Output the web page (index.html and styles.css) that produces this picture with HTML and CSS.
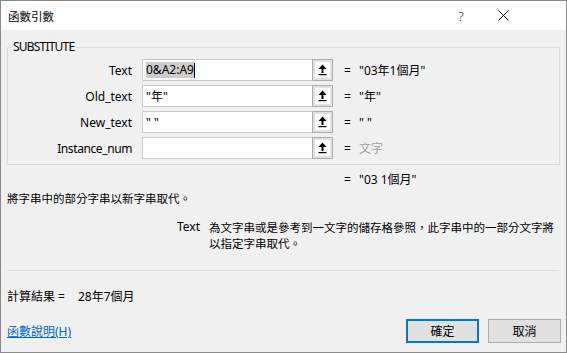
FILE: index.html
```html
<!DOCTYPE html>
<html lang="zh-Hant">
<head>
<meta charset="utf-8">
<title>函數引數</title>
<link rel="stylesheet" href="styles.css">
</head>
<body>
<div class="window">
  <div class="titlebar">
    <span class="title">函數引數</span>
    <span class="help">?</span>
    <span class="close"><svg width="11" height="11" viewBox="0 0 11 11"><path d="M0.5 0.5 L10.5 10.5 M10.5 0.5 L0.5 10.5" stroke="#000" stroke-width="1" fill="none"/></svg></span>
  </div>
  <div class="content">
    <fieldset class="group">
      <legend>SUBSTITUTE</legend>
      <div class="row">
        <span class="label">Text</span>
        <span class="field"><span class="input"><span class="sel">0&amp;A2:A9</span><span class="caret"></span></span><span class="refbtn"><svg width="9" height="12" viewBox="0 0 9 12"><path d="M4.5 0.5 L8.5 5 L5.5 5 L5.5 9 L3.5 9 L3.5 5 L0.5 5 Z" fill="#000"/><rect x="0.5" y="10" width="8" height="1.2" fill="#000"/></svg></span></span>
        <span class="eq">=</span>
        <span class="val">"03年1個月"</span>
      </div>
      <div class="row">
        <span class="label">Old_text</span>
        <span class="field"><span class="input">"年"</span><span class="refbtn"><svg width="9" height="12" viewBox="0 0 9 12"><path d="M4.5 0.5 L8.5 5 L5.5 5 L5.5 9 L3.5 9 L3.5 5 L0.5 5 Z" fill="#000"/><rect x="0.5" y="10" width="8" height="1.2" fill="#000"/></svg></span></span>
        <span class="eq">=</span>
        <span class="val">"年"</span>
      </div>
      <div class="row">
        <span class="label">New_text</span>
        <span class="field"><span class="input">" "</span><span class="refbtn"><svg width="9" height="12" viewBox="0 0 9 12"><path d="M4.5 0.5 L8.5 5 L5.5 5 L5.5 9 L3.5 9 L3.5 5 L0.5 5 Z" fill="#000"/><rect x="0.5" y="10" width="8" height="1.2" fill="#000"/></svg></span></span>
        <span class="eq">=</span>
        <span class="val">" "</span>
      </div>
      <div class="row">
        <span class="label tight">Instance_num</span>
        <span class="field"><span class="input"></span><span class="refbtn"><svg width="9" height="12" viewBox="0 0 9 12"><path d="M4.5 0.5 L8.5 5 L5.5 5 L5.5 9 L3.5 9 L3.5 5 L0.5 5 Z" fill="#000"/><rect x="0.5" y="10" width="8" height="1.2" fill="#000"/></svg></span></span>
        <span class="eq">=</span>
        <span class="val muted">文字</span>
      </div>
    </fieldset>
    <div class="result"><span class="eq">=</span><span class="val">"03 1個月"</span></div>
    <div class="desc">將字串中的部分字串以新字串取代。</div>
    <div class="param">
      <span class="pname">Text</span>
      <span class="ptext">為文字串或是參考到一文字的儲存格參照，此字串中的一部分文字將<br>以指定字串取代。</span>
    </div>
    <div class="sep"></div>
    <div class="calc"><span>計算結果 =</span><span class="calcval">28年7個月</span></div>
    <div class="footer">
      <a class="helplink" href="#">函數說明(H)</a>
      <div class="buttons">
        <button class="btn ok">確定</button>
        <button class="btn">取消</button>
      </div>
    </div>
  </div>
</div>
</body>
</html>
```

FILE: styles.css
```css
* { box-sizing: border-box; }
html, body { margin: 0; padding: 0; }
body {
  font-family: "Segoe UI", "Noto Sans", "Noto Sans CJK TC", sans-serif;
  font-size: 12px;
  color: #000;
  background: #fff;
}
.window {
  width: 567px;
  height: 353px;
  border: 1px solid #8a8a8a;
  background: #f0f0f0;
  display: flex;
  flex-direction: column;
}
.titlebar {
  height: 29px;
  background: #fff;
  display: flex;
  align-items: center;
  padding-left: 7px;
  padding-right: 53px;
  flex-shrink: 0;
}
.title { flex: 1; font-family: "Noto Sans CJK TC", sans-serif; font-size: 11.5px; }
.help {
  width: 20px;
  text-align: center;
  font-size: 13px;
  font-weight: 300;
  color: #222;
  margin-right: 22px;
}
.close { width: 20px; display: flex; justify-content: center; }
.content {
  flex: 1;
  padding: 0 6px;
  display: flex;
  flex-direction: column;
}
.group {
  margin: 9px 0 0 0;
  padding: 4px 0 5px 0;
  border: 1px solid #dcdcdc;
  display: flex;
  flex-direction: column;
  gap: 4px;
}
.group legend {
  margin-left: 3px;
  padding: 0 2px;
  line-height: 16px;
  font-size: 12px;
  letter-spacing: -0.8px;
}
.row {
  display: flex;
  align-items: center;
  height: 22px;
}
.label {
  width: 124px;
  text-align: right;
  margin-right: 10px;
}
.label.tight { letter-spacing: -0.4px; }
.field {
  display: flex;
  height: 22px;
}
.input {
  width: 170px;
  height: 22px;
  background: #fff;
  border: 1px solid #c8c8c8;
  border-right: none;
  padding: 0 3px;
  display: flex;
  align-items: center;
}
.sel { background: #cccccc; line-height: 16px; }
.caret { width: 1px; height: 15px; background: #000; }
.refbtn {
  width: 21px;
  height: 22px;
  border: 1px solid #adadad;
  background: #e1e1e1;
  padding: 2px;
  display: flex;
  box-shadow: inset 0 0 0 2px #e1e1e1, inset 0 0 0 9px #fff;
}
.refbtn svg { margin: auto; }
.eq { margin-left: 11px; width: 15px; }
.val { white-space: pre; }
.muted { color: #a0a0a0; }
.result {
  display: flex;
  margin-top: 7px;
  height: 16px;
  line-height: 16px;
  padding-left: 326px;
}
.desc {
  margin-top: 2px;
  line-height: 16px;
  font-size: 11.5px;
  font-family: "Noto Sans CJK TC", sans-serif;
}
.param {
  display: flex;
  margin-top: 13px;
  line-height: 16px;
}
.pname { width: 193px; text-align: right; margin-right: 9px; }
.ptext { font-family: "Noto Sans CJK TC", sans-serif; font-size: 11.5px; }
.sep {
  margin-top: 19px;
  height: 1px;
  background: #dcdcdc;
  margin-right: 1px;
}
.calc {
  margin-top: 18px;
  line-height: 16px;
  display: flex;
}
.calcval { margin-left: 13px; }
.footer {
  margin-top: auto;
  margin-bottom: 9px;
  display: flex;
  align-items: center;
  justify-content: space-between;
}
.helplink {
  color: #0066cc;
  text-decoration: underline;
  font-size: 12px;
}
.buttons { display: flex; gap: 9px; margin-right: -1px; }
.btn {
  width: 73px;
  height: 24px;
  border: 1px solid #adadad;
  background: #e1e1e1;
  font-family: "Segoe UI", "Noto Sans", "Noto Sans CJK TC", sans-serif;
  font-size: 12px;
  color: #000;
  padding: 0;
}
.btn.ok { border: 1px solid #0078d7; box-shadow: inset 0 0 0 1px #0078d7; }
```
